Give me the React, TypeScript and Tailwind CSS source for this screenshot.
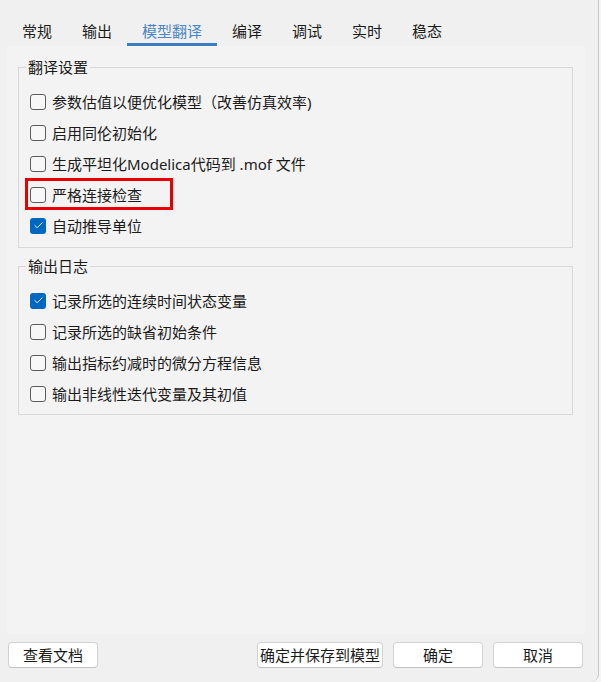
import { Check } from 'lucide-react';

const tabs = ['常规', '输出', '模型翻译', '编译', '调试', '实时', '稳态'];

const translateOptions = [
  { label: '参数估值以便优化模型（改善仿真效率)', checked: false },
  { label: '启用同伦初始化', checked: false },
  { label: '生成平坦化Modelica代码到 .mof 文件', checked: false },
  { label: '严格连接检查', checked: false, highlight: true },
  { label: '自动推导单位', checked: true },
];

const logOptions = [
  { label: '记录所选的连续时间状态变量', checked: true },
  { label: '记录所选的缺省初始条件', checked: false },
  { label: '输出指标约减时的微分方程信息', checked: false },
  { label: '输出非线性迭代变量及其初值', checked: false },
];

type Option = { label: string; checked: boolean; highlight?: boolean };

const CheckRow = ({ option }: { option: Option }) => (
  <div className="relative flex h-[31px] items-center pl-[11px]">
    {option.checked ? (
      <span className="flex h-[16px] w-[16px] items-center justify-center rounded-[3px] bg-[#0067c0]">
        <Check className="h-[11px] w-[11px] text-white" strokeWidth={2} />
      </span>
    ) : (
      <span className="h-[16px] w-[16px] rounded-[3px] border border-[#5c5c5c] bg-[#f7f7f7]" />
    )}
    <span className="ml-[6px] text-[15px] leading-[22px] text-[#1b1b1b]">{option.label}</span>
    {option.highlight && (
      <span className="absolute left-[6px] top-[-1px] h-[32px] w-[148px] border-[3px] border-[#e80000]" />
    )}
  </div>
);

const GroupBox = ({ title, options, className }: { title: string; options: Option[]; className: string }) => (
  <fieldset className={`border border-[#d8d8d8] ${className}`}>
    <legend className="ml-[7px] px-[2px] text-[15px] leading-[22px] text-[#1b1b1b]">{title}</legend>
    <div className="pt-[8px]">
      {options.map((opt, idx) => (
        <CheckRow key={idx} option={opt} />
      ))}
    </div>
  </fieldset>
);

const Button = ({ label, width }: { label: string; width: string }) => (
  <button
    className={`${width} h-[26px] rounded-[4px] border border-[#d2d2d2] border-b-[#c4c4c4] bg-white text-[15px] leading-[22px] text-[#1b1b1b]`}
  >
    {label}
  </button>
);

export default function App() {
  return (
    <div
      className="flex h-[682px] w-[601px] bg-[#f5f5f5]"
      style={{ fontFamily: '"Noto Sans", "Noto Sans CJK SC", sans-serif' }}
    >
      <div className="flex h-full w-[599px] flex-col rounded-br-[8px] border-r border-[#c9c9c9] bg-[#f0f0f0]">
        {/* Tabs */}
        <div className="flex h-[46px] pl-[7px]">
          {tabs.map((tab, idx) => {
            const active = idx === 2;
            return (
              <div
                key={tab}
                className={`flex flex-col pt-[20px] ${active ? 'text-[#4a85c7]' : 'text-[#1b1b1b]'}`}
              >
                <span className="px-[15px] text-[15px] leading-[22px]">{tab}</span>
                <span className={`mt-[1px] h-[3px] w-full ${active ? 'bg-[#3b7dc4]' : ''}`} />
              </div>
            );
          })}
        </div>

        {/* Pane */}
        <div className="mx-[7px] h-[588px] w-[578px] bg-[#f3f3f3] pl-[11px] pr-[12px] pt-[10px]">
          <GroupBox title="翻译设置" options={translateOptions} className="pb-[6px]" />
          <GroupBox title="输出日志" options={logOptions} className="mt-[7px] pb-[5px]" />
        </div>

        {/* Buttons */}
        <div className="flex pl-[8px] pr-[15px] pt-[8px]">
          <Button label="查看文档" width="w-[90px]" />
          <div className="ml-auto flex gap-[10px]">
            <Button label="确定并保存到模型" width="w-[126px]" />
            <Button label="确定" width="w-[90px]" />
            <Button label="取消" width="w-[90px]" />
          </div>
        </div>
      </div>
    </div>
  );
}
